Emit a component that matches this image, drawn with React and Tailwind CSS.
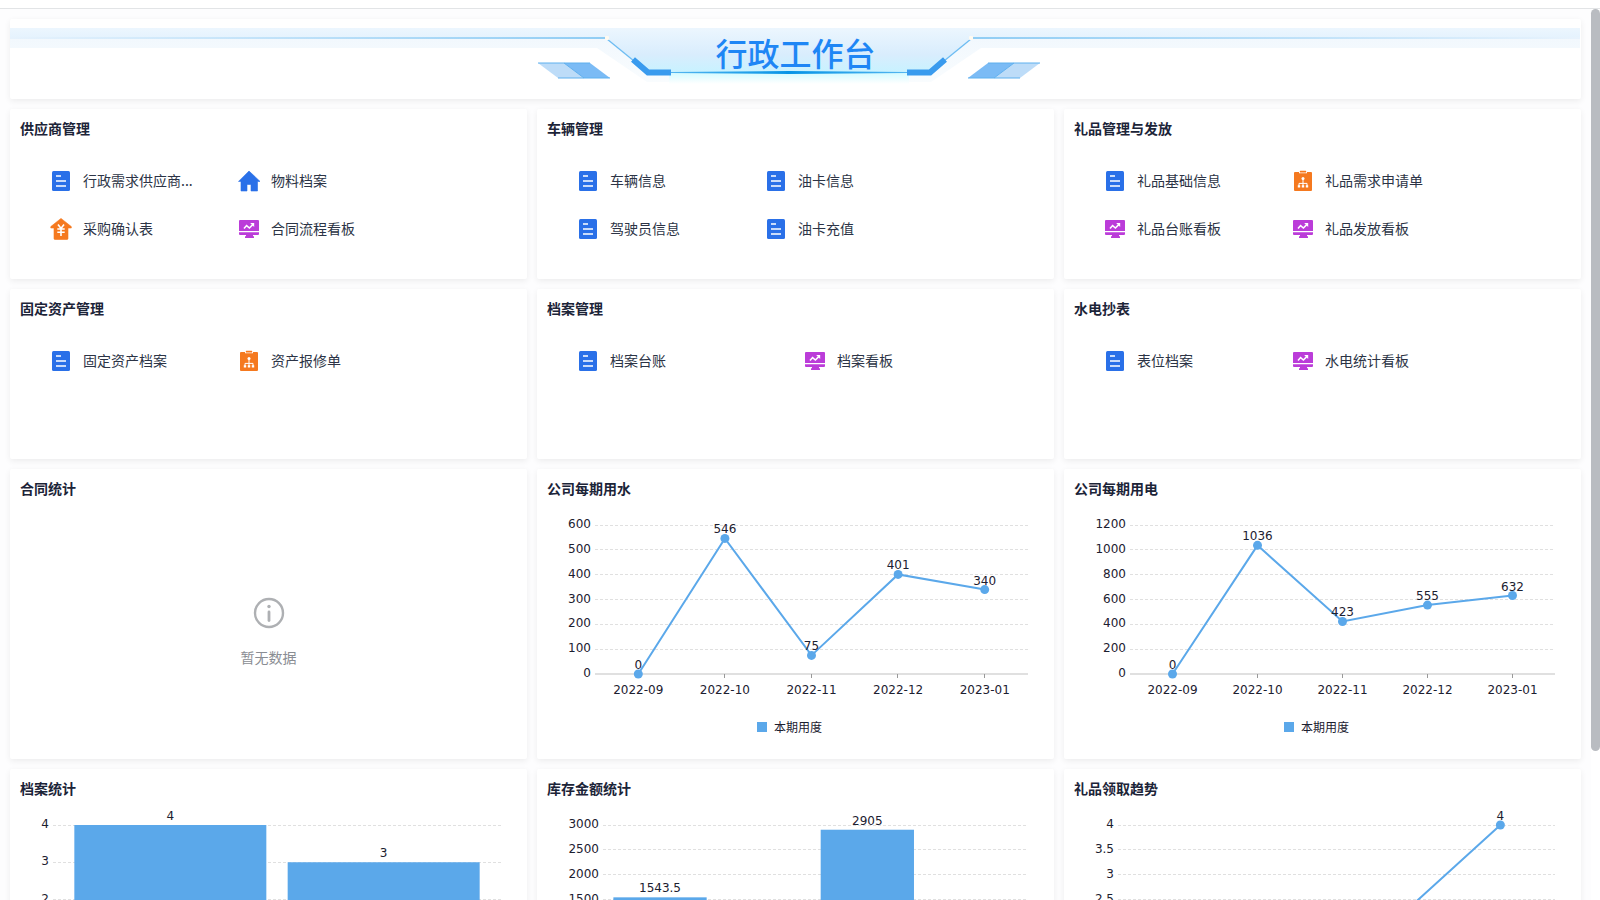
import { useLayoutEffect, useRef, useState } from 'react'

const BLUE = '#5ba8ea'
const PLOT_TOP = 16
const PLOT_BOTTOM = 165
const CHAR_W = 7.63

const LEGEND = '本期用度'

const MENUS = [
  {
    title: '供应商管理',
    items: [
      ['doc', '行政需求供应商...'],
      ['home', '物料档案'],
      ['yen', '采购确认表'],
      ['board', '合同流程看板'],
    ],
  },
  {
    title: '车辆管理',
    items: [
      ['doc', '车辆信息'],
      ['doc', '油卡信息'],
      ['doc', '驾驶员信息'],
      ['doc', '油卡充值'],
    ],
  },
  {
    title: '礼品管理与发放',
    items: [
      ['doc', '礼品基础信息'],
      ['form', '礼品需求申请单'],
      ['board', '礼品台账看板'],
      ['board', '礼品发放看板'],
    ],
  },
  {
    title: '固定资产管理',
    items: [
      ['doc', '固定资产档案'],
      ['form', '资产报修单'],
    ],
  },
  {
    title: '档案管理',
    wide: true,
    items: [
      ['doc', '档案台账'],
      ['board', '档案看板'],
    ],
  },
  {
    title: '水电抄表',
    items: [
      ['doc', '表位档案'],
      ['board', '水电统计看板'],
    ],
  },
]

const MONTHS = ['2022-09', '2022-10', '2022-11', '2022-12', '2023-01']

function Icon({ name }) {
  if (name === 'doc')
    return (
      <svg viewBox="0 0 24 24" className="size-6 shrink-0" aria-hidden="true">
        <rect x="3" y="2" width="18" height="20" rx="1.5" fill="#2a70e8" />
        <path d="M7 7h5M7 12h10M7 17h10" stroke="#fff" strokeWidth="1.6" />
      </svg>
    )
  if (name === 'home')
    return (
      <svg viewBox="0 0 24 24" className="size-6 shrink-0" aria-hidden="true">
        <path d="M12 2 1.5 12.4H4V22h6v-6.5h4V22h6.5v-9.6H23z" fill="#2a70e8" stroke="#2a70e8" strokeWidth=".6" strokeLinejoin="round" />
      </svg>
    )
  if (name === 'yen')
    return (
      <svg viewBox="0 0 24 24" className="size-6 shrink-0" aria-hidden="true">
        <path d="M12 1.4 1.8 9.6V11H5v10.5c0 .6.4 1 1 1h12c.6 0 1-.4 1-1V11h3.3V9.6z" fill="#f5791f" stroke="#f5791f" strokeWidth=".6" strokeLinejoin="round" />
        <path d="m9 7.5 3 4 3-4M12 11.5V19M8.3 12h7.4M8.3 15.2h7.4" fill="none" stroke="#fff" strokeWidth="1.6" />
      </svg>
    )
  if (name === 'form')
    return (
      <svg viewBox="0 0 24 24" className="size-6 shrink-0" aria-hidden="true">
        <path d="M4 3h4v1.2h8V3h4a1 1 0 0 1 1 1v17a1 1 0 0 1-1 1H4a1 1 0 0 1-1-1V4a1 1 0 0 1 1-1z" fill="#f5791f" />
        <rect x="8.8" y="1.8" width="6.4" height="1.8" rx=".6" fill="#f5791f" />
        <path d="M12 10v7M8 17v-2.6h8V17" fill="none" stroke="#fff" strokeWidth="1" />
        <circle cx="12" cy="9.6" r="1.5" fill="#fff" />
        <path d="M6.8 16.2h2.4v2.2H6.8zM10.8 16.2h2.4v2.2h-2.4zM14.8 16.2h2.4v2.2h-2.4z" fill="#fff" />
      </svg>
    )
  return (
    <svg viewBox="0 0 24 24" className="size-6 shrink-0" aria-hidden="true">
      <path d="M3 3h18a1 1 0 0 1 1 1v10H2V4a1 1 0 0 1 1-1zM2 15.2h20V17a1 1 0 0 1-1 1h-5v1.2h1V21H8v-1.8h1V18H3a1 1 0 0 1-1-1z" fill="#bb3cd9" />
      <path d="m7 11.6 2.6-3 2.8 2.4L16 7.4" fill="none" stroke="#fff" strokeWidth="1.5" />
      <path d="M13.2 6h4v4z" fill="#fff" />
    </svg>
  )
}

function Card({ title, className = '', children }) {
  return (
    <section className={`rounded-xs bg-white shadow-[0_2px_6px_rgba(0,0,0,0.07)] ${className}`}>
      <h2 className="flex h-[38px] items-center px-[10px] text-sm font-bold text-[#1c2438]">{title}</h2>
      {children}
    </section>
  )
}

function MenuCard({ title, items, wide }) {
  return (
    <Card title={title} className="h-[170px]">
      <nav className={`grid pt-[10px] pl-[39px] ${wide ? 'grid-cols-[227px_1fr]' : 'grid-cols-[188px_1fr]'}`}>
        {items.map(([icon, label]) => (
          <a key={label} href="#" className="flex h-12 items-center gap-[10px] text-sm whitespace-nowrap text-[#2c3446]">
            <Icon name={icon} />
            <span className="pb-[2px]">{label}</span>
          </a>
        ))}
      </nav>
    </Card>
  )
}

function useWidth() {
  const ref = useRef(null)
  const [width, setWidth] = useState(517)
  useLayoutEffect(() => {
    const measure = () => setWidth(ref.current.clientWidth)
    measure()
    const ro = new ResizeObserver(measure)
    ro.observe(ref.current)
    return () => ro.disconnect()
  }, [])
  return [ref, width]
}

function Chart({ type, labels, values, ticks }) {
  const [ref, width] = useWidth()
  const min = ticks[0]
  const max = ticks[ticks.length - 1]
  const labelW = Math.max(...ticks.map((t) => String(t).replace('.', '').length * CHAR_W + (String(t).includes('.') ? 4 : 0)))
  const left = Math.round(35 + labelW)
  const right = width - 26
  const n = labels.length
  const y = (v) => PLOT_BOTTOM - ((v - min) / (max - min)) * (PLOT_BOTTOM - PLOT_TOP)
  const step = type === 'bar' ? (right - left) / (n + 0.1) : (right - left) / n
  const barW = step * 0.9
  const cx = (i) => (type === 'bar' ? left + step * 0.1 + step * i + barW / 2 : left + step * (i + 0.5))

  return (
    <div ref={ref} className="pt-[2px]">
      <svg width={width} height="192" className="block font-['DejaVu_Sans',sans-serif] text-xs" fill="#1c2030">
        {ticks.map((t) => (
          <g key={t}>
            {t > min && (
              <line x1={left} x2={right} y1={Math.floor(y(t)) + 0.5} y2={Math.floor(y(t)) + 0.5} stroke="#e0e0e0" strokeDasharray="3 2" />
            )}
            <text x={left - 4} y={Math.round(y(t)) + 3} textAnchor="end">{t}</text>
          </g>
        ))}
        <line x1={left} x2={right} y1={PLOT_BOTTOM} y2={PLOT_BOTTOM} stroke="#e0e0e0" strokeWidth="2" />
        {labels.map((l, i) => (
          <g key={l}>
            <line x1={Math.round(cx(i)) - 0.5} x2={Math.round(cx(i)) - 0.5} y1={PLOT_BOTTOM} y2={PLOT_BOTTOM + 4} stroke="#999" />
            <text x={cx(i)} y={PLOT_BOTTOM + 20} textAnchor="middle">{l}</text>
          </g>
        ))}
        {type === 'bar' ? (
          values.map((v, i) => <rect key={i} x={cx(i) - barW / 2} y={y(v)} width={barW} height={PLOT_BOTTOM - y(v)} fill={BLUE} />)
        ) : (
          <g>
            <polyline points={values.map((v, i) => `${cx(i)},${y(v)}`).join(' ')} fill="none" stroke={BLUE} strokeWidth="2" />
            {values.map((v, i) => <circle key={i} cx={cx(i)} cy={y(v)} r="4.5" fill={BLUE} />)}
          </g>
        )}
        {values.map((v, i) => (
          <text key={i} x={cx(i)} y={y(v) - 5} textAnchor="middle">{v}</text>
        ))}
      </svg>
      <div className="mt-4 flex h-5 items-center justify-center gap-[7px] pr-3 text-xs text-[#1c2030]">
        <span className="size-[10px] bg-[#5ba8ea]" />
        {LEGEND}
      </div>
    </div>
  )
}

function BannerHalf() {
  return (
    <g>
      <polygon points="-791,9 -182,9 -132,54 0,54 0,63 -142,63 -192,29 -791,29" fill="url(#haze)" />
      <polygon points="-791,9 0,9 0,53 -140,53 -182,20 -791,20" fill="url(#sky)" />
      <rect x="-120" y="54" width="120" height="11" fill="url(#glow)" />
      <rect x="-791" y="18" width="609" height="2" fill="url(#rail)" />
      <path d="M-182 20-155 42" stroke="#6dbcf2" strokeWidth="1.3" />
      <rect x="-184" y="17" width="4" height="4" rx="1" fill="#fffaf0" />
      <path d="M-156 40.5-141 53.5H-118" fill="none" stroke="#3a9bee" strokeWidth="6" />
      <polygon points="-118,53 0,52 0,55 -118,54" fill="url(#base)" />
      <polygon points="-251,44 -225,44 -205,59 -231,59" fill="#bddcf8" />
      <polygon points="-225,44 -199,44 -179,59 -205,59" fill="#7bbbf5" />
      <path d="M-251 44h52M-225 44-205 59M-231 59h52" stroke="#5fb0ee" strokeWidth="1" />
    </g>
  )
}

function Banner() {
  return (
    <header className="relative h-20 overflow-hidden rounded-xs bg-white shadow-[0_2px_6px_rgba(0,0,0,0.07)]">
      <div className="flex h-full justify-center pr-[14px]">
        <svg viewBox="-779 0 1558 80" className="h-20 w-[1558px] shrink-0 overflow-visible" aria-hidden="true">
          <defs>
            <linearGradient id="sky" x1="0" y1="0" x2="0" y2="1">
              <stop offset="0" stopColor="#ecf6fe" />
              <stop offset="0.6" stopColor="#d9edfd" />
              <stop offset="1" stopColor="#c8f2ff" />
            </linearGradient>
            <linearGradient id="haze" x1="0" y1="0" x2="0" y2="1">
              <stop offset="0" stopColor="#f0f7fd" />
              <stop offset="1" stopColor="#f9fcfe" />
            </linearGradient>
            <linearGradient id="glow" x1="0" y1="0" x2="0" y2="1">
              <stop offset="0" stopColor="#d5fbff" />
              <stop offset="1" stopColor="#ffffff" />
            </linearGradient>
            <linearGradient id="rail" x1="0" x2="1">
              <stop offset="0" stopColor="#e8f3fd" />
              <stop offset="1" stopColor="#90cdf4" />
            </linearGradient>
            <linearGradient id="base" x1="0" x2="1">
              <stop offset="0" stopColor="#53b5f0" />
              <stop offset="1" stopColor="#0694e6" />
            </linearGradient>
          </defs>
          <BannerHalf />
          <g transform="scale(-1 1)">
            <BannerHalf />
          </g>
        </svg>
      </div>
      <h1 className="absolute inset-x-0 top-[10px] text-center text-[32px] leading-[46px] font-medium text-[#1e86f5]">行政工作台</h1>
    </header>
  )
}

function EmptyState() {
  return (
    <div className="flex flex-col items-center gap-[18px] pt-[90px] text-sm text-[#8a8d93]">
      <svg viewBox="0 0 32 32" className="size-8" fill="none" stroke="#aeb0b3" strokeWidth="2.4" strokeLinecap="round" aria-hidden="true">
        <circle cx="16" cy="16" r="14" />
        <path d="M16 15v8.5" strokeWidth="2.8" />
        <circle cx="16" cy="9.5" r="1.7" fill="#aeb0b3" stroke="none" />
      </svg>
      <p>暂无数据</p>
    </div>
  )
}

export default function App() {
  return (
    <div className="flex h-screen flex-col overflow-hidden bg-white font-['Noto_Sans_CJK_SC',sans-serif]">
      <div className="h-[9px] shrink-0 border-b border-[#e2e4e6]" />
      <div className="flex min-h-0 flex-1">
        <main className="min-w-0 flex-1 space-y-[10px] overflow-hidden bg-[#fdfdfe] p-[10px]">
          <Banner />
          <div className="grid grid-cols-3 gap-[10px]">
            {MENUS.map((m) => <MenuCard key={m.title} {...m} />)}
            <Card title="合同统计" className="h-[290px]">
              <EmptyState />
            </Card>
            <Card title="公司每期用水" className="h-[290px]">
              <Chart type="line" labels={MONTHS} values={[0, 546, 75, 401, 340]} ticks={[0, 100, 200, 300, 400, 500, 600]} />
            </Card>
            <Card title="公司每期用电" className="h-[290px]">
              <Chart type="line" labels={MONTHS} values={[0, 1036, 423, 555, 632]} ticks={[0, 200, 400, 600, 800, 1000, 1200]} />
            </Card>
            <Card title="档案统计" className="h-[290px]">
              <Chart type="bar" labels={['合同', '证照']} values={[4, 3]} ticks={[0, 1, 2, 3, 4]} />
            </Card>
            <Card title="库存金额统计" className="h-[290px]">
              <Chart type="bar" labels={['办公', '茶具', '酒水', '其他']} values={[1543.5, 600, 2905, 400]} ticks={[0, 500, 1000, 1500, 2000, 2500, 3000]} />
            </Card>
            <Card title="礼品领取趋势" className="h-[290px]">
              <Chart type="line" labels={MONTHS.slice(1)} values={[1, 1, 2, 4]} ticks={[1, 1.5, 2, 2.5, 3, 3.5, 4]} />
            </Card>
          </div>
        </main>
        <div className="w-[9px] shrink-0">
          <div className="h-[742px] rounded-full bg-[#b9bcc1]" />
        </div>
      </div>
    </div>
  )
}
